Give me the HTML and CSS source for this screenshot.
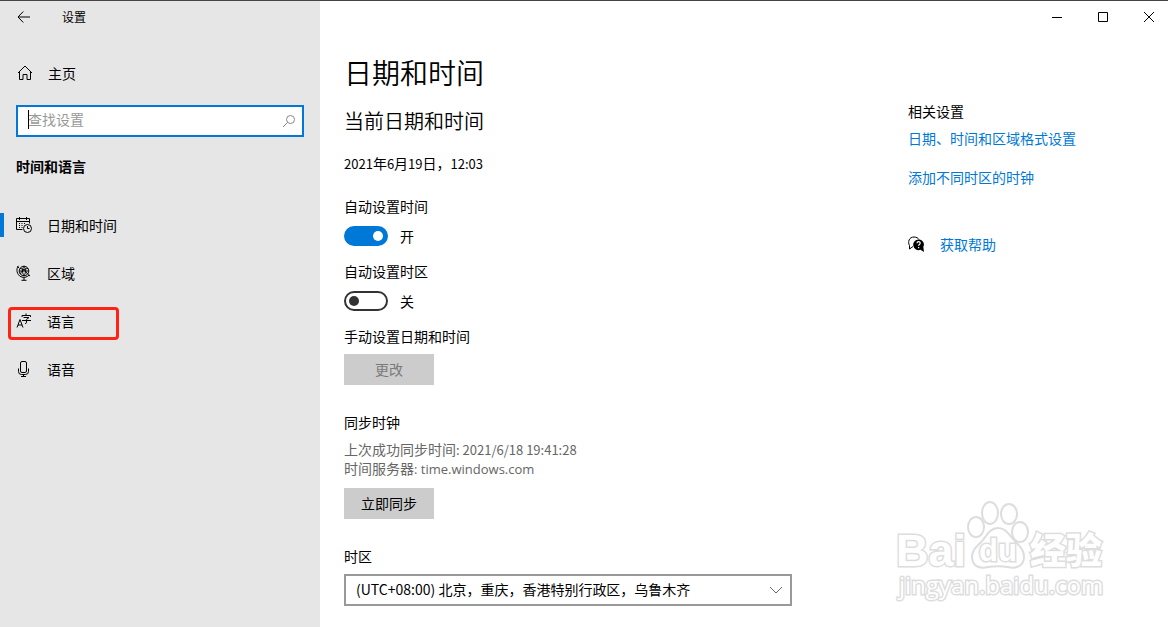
FILE: index.html
```html
<!DOCTYPE html>
<html lang="zh-CN">
<head>
	<meta charset="UTF-8">
	<meta name="viewport" content="width=device-width, initial-scale=1">
	<title>设置</title>
	<link rel="stylesheet" href="styles.css">
</head>
<body>
	<div class="window">
		<aside class="sidebar">
			<header class="titlebar">
				<button class="back" type="button" aria-label="返回">
					<svg width="14" height="12" viewBox="0 0 14 12"><path d="M13 6H1M6.300 .5L1 6l5.300 5.500"/></svg>
				</button>
				<span class="app-name">设置</span>
			</header>
			<a class="nav-link home" href="#">
				<svg class="icon" width="16" height="16" viewBox="0 0 16 16"><path d="M1 8l7-7 7 7M2.500 7v7.500h3.500v-5h4v5h3.500V7"/></svg>
				<span>主页</span>
			</a>
			<div class="search">
				<input type="text" placeholder="查找设置" aria-label="查找设置">
				<i class="caret"></i>
				<svg class="search-icon" width="14" height="14" viewBox="0 0 14 14"><circle cx="8.500" cy="5.500" r="4"/><path d="M5.600 8.400L1 13"/></svg>
			</div>
			<h2 class="group-title">时间和语言</h2>
			<nav>
				<a class="nav-link active" href="#">
					<svg class="icon" width="16" height="16" viewBox="0 0 16 16">
						<path d="M6.500 12.500h-6v-11h13v5M.5 4.500h13M3.500 0v3M10.500 0v3"/>
						<path d="M3 6.500h1M5.500 6.500h1M8 6.500h1M3 8.500h1M5.500 8.500h1M3 10.500h1M5.500 10.500h1"/>
						<circle cx="11.500" cy="11.500" r="4"/><path d="M11.500 9v2.500h2"/>
					</svg>
					<span>日期和时间</span>
				</a>
				<a class="nav-link" href="#">
					<svg class="icon" width="16" height="16" viewBox="0 0 16 16">
						<circle cx="8" cy="6" r="4.800"/>
						<path d="M4 3.500c2.500 0 6.500 2.500 7.500 5.500M12 3.500C9 3.500 5 6 4.500 9M8 1.200c-2 3-2 6.500 0 9.600M8 1.200c2 3 2 6.500 0 9.600M3.500 6h9"/>
						<path d="M2.500 .8C-.5 4 1 10 5 11.800c2.700 1.200 6 .6 8.300-1.800M8 12.500v2.500M5.500 15.300h5M1.500 1.500l1.500 1.500M12 9.500l2 1.500"/>
					</svg>
					<span>区域</span>
				</a>
				<a class="nav-link marked" href="#">
					<svg class="icon" width="16" height="16" viewBox="0 0 16 16">
						<path d="M1 14.500L4 6.500l3 8M2 12h4"/>
						<path d="M6 4V2.500h8.500V4M10 .5v2M7.500 4.500H13l-2.500 2M6 7.500h9M10.500 6.500v3q0 1-1.500 1"/>
					</svg>
					<span>语言</span>
				</a>
				<a class="nav-link" href="#">
					<svg class="icon" width="16" height="16" viewBox="0 0 16 16"><rect x="4.500" y=".5" width="6" height="11" rx="1.500"/><path d="M2.500 7.500v3q0 3 3 3h4q3 0 3-3v-3M7.500 13.500v2M5 15.500h5"/></svg>
					<span>语音</span>
				</a>
			</nav>
		</aside>

		<div class="page">
			<div class="window-controls">
				<button type="button" aria-label="最小化"><svg width="10" height="10" viewBox="0 0 10 10"><path d="M0 5.500h10"/></svg></button>
				<button type="button" aria-label="最大化"><svg width="10" height="10" viewBox="0 0 10 10"><path d="M.5 .5h9v9h-9z"/></svg></button>
				<button type="button" aria-label="关闭"><svg width="10" height="10" viewBox="0 0 10 10"><path d="M0 0l10 10M10 0L0 10"/></svg></button>
			</div>
			<div class="columns">
				<main class="content">
					<h1>日期和时间</h1>
					<h2>当前日期和时间</h2>
					<p class="now"><span class="num">2021</span>年<span class="num">6</span>月<span class="num">19</span>日，<span class="num">12:03</span></p>

					<div class="setting">
						<label for="auto-time">自动设置时间</label>
						<div class="toggle"><input type="checkbox" id="auto-time" checked><span>开</span></div>
					</div>
					<div class="setting">
						<label for="auto-zone">自动设置时区</label>
						<div class="toggle"><input type="checkbox" id="auto-zone"><span>关</span></div>
					</div>
					<div class="setting">
						<label for="change">手动设置日期和时间</label>
						<button class="btn" id="change" type="button" disabled>更改</button>
					</div>

					<section class="sync">
						<h3>同步时钟</h3>
						<p>上次成功同步时间<span class="num">: 2021/6/18 19:41:28</span></p>
						<p>时间服务器<span class="latin">: time.windows.com</span></p>
						<button class="btn" type="button">立即同步</button>
					</section>

					<div class="setting">
						<label for="zone">时区</label>
						<div class="select">
							<select id="zone">
								<option>(UTC+08:00) 北京，重庆，香港特别行政区，乌鲁木齐</option>
							</select>
							<svg width="14" height="8" viewBox="0 0 14 8"><path d="M1 1l6 6 6-6"/></svg>
						</div>
					</div>
				</main>
				<aside class="related">
					<h3>相关设置</h3>
					<a href="#">日期、时间和区域格式设置</a>
					<a href="#">添加不同时区的时钟</a>
					<a class="help" href="#">
						<svg width="17" height="16" viewBox="0 0 17 16">
							<path class="bubble" d="M5 10.500L1.500 13V9.500C-.5 6 1 1 6 1c2.500 0 4 1 5 2.500"/>
							<path class="bubble-solid" d="M10.500 3.500a5 5 0 0 1 4.800 7.300L16 16l-3.500-2.300a5.300 5.300 0 1 1-2-10.200z"/>
							<path class="question" d="M9 7.200q0-1.500 1.600-1.500t1.600 1.400q0 .8-.8 1.300t-.8 1.400M10.600 11v1.200"/>
						</svg>
						<span>获取帮助</span>
					</a>
				</aside>
			</div>
		</div>

		<svg class="watermark" width="216" height="108" viewBox="0 0 216 108">
			<g class="paw">
				<ellipse cx="96" cy="13" rx="8" ry="11"/>
				<ellipse cx="115" cy="14" rx="8" ry="10"/>
				<ellipse cx="82" cy="27" rx="8" ry="10"/>
				<ellipse cx="126" cy="32" rx="8" ry="10"/>
				<path d="M104 28c-8 0-11 7-15 12-5 6-11 9-11 17 0 10 9 12 16 10 7-1 13-1 20 0 8 2 16-1 16-10 0-8-5-11-10-17-5-5-8-12-16-12z"/>
			</g>
			<text class="logo-text" x="2" y="66" font-size="45">Bai</text>
			<text class="logo-du" x="85" y="61" font-size="31">du</text>
			<text class="logo-cjk" x="136" y="64" font-size="36">经验</text>
			<text class="logo-url" x="5" y="94" font-size="24">jingyan.baidu.com</text>
		</svg>
	</div>
</body>
</html>
```
FILE: styles.css
```css
*, *::before, *::after {box-sizing: border-box;margin: 0;padding: 0;}
body {font: 14px/20px "Noto Sans CJK SC", sans-serif;color: #000;background: #fff;}
a {color: #0078d7;text-decoration: none;}
button, input, select {font: inherit;color: inherit;border: 0;outline: 0;}
svg {flex: none;fill: none;stroke: #000;stroke-width: 1;}
h1, h2, h3 {font-weight: 400;}
.latin, .num {font-size: 13px;line-height: 1;}
.latin {font-family: "Open Sans", sans-serif;}

.window {position: relative;display: flex;min-height: 100vh;border-top: 1px solid #444;overflow: hidden;}

/* left pane */
.sidebar {width: 320px;flex: none;background: #e6e6e6;}
.titlebar {display: flex;align-items: center;height: 32px;font-size: 12px;}
.back {display: flex;align-items: center;justify-content: center;width: 48px;height: 32px;background: none;}
.app-name {padding-left: 14px;}
.nav-link {position: relative;display: flex;align-items: center;gap: 15px;height: 48px;padding-left: 16px;color: #000;}
.home {margin-top: 16px;padding-left: 17px;}
.search {position: relative;display: flex;margin: 8px 16px 0;}
.search input {width: 100%;height: 32px;padding: 0 36px 4px 10px;background: #fff;border: 2px solid #0078d7;}
.search input::placeholder {color: #999;opacity: 1;}
.search .caret {position: absolute;left: 12px;top: 5px;width: 1px;height: 19px;background: #000;}
.search-icon {position: absolute;right: 8px;top: 9px;stroke: #888;}
.group-title {margin: 19px 16px 25px;font-size: 14px;font-weight: 700;}
.active::before {content: "";position: absolute;left: 0;top: 12px;width: 4px;height: 24px;background: #0078d7;}
.marked::after {content: "";position: absolute;left: 8px;top: 10px;width: 111px;height: 33px;border: 3px solid #ff2315;border-radius: 4px;}

/* right pane */
.page {flex: 1;min-width: 0;}
.window-controls {display: flex;justify-content: flex-end;height: 32px;margin-right: -4px;}
.window-controls button {display: flex;align-items: center;justify-content: center;width: 46px;background: none;}
.columns {display: flex;gap: 116px;padding: 19px 24px;}
.content {flex: 0 1 448px;min-width: 0;}
h1 {font-size: 28px;line-height: 40px;font-weight: 350;}
.content h2 {margin-top: 15px;font-size: 20px;line-height: 28px;font-weight: 350;}
.now {margin: 18px 0 24px;}
.setting label {display: block;line-height: 18px;}
.toggle {display: flex;align-items: center;gap: 12px;height: 20px;margin: 11px 0 16px;}
.toggle input {appearance: none;width: 44px;height: 20px;padding: 3px;border: 2px solid #333;border-radius: 10px;}
.toggle input::before {content: "";display: block;width: 10px;height: 10px;background: #333;border-radius: 50%;}
.toggle input:checked {background: #0078d7;border-color: #0078d7;}
.toggle input:checked::before {margin-left: auto;background: #fff;}
.btn {display: block;width: 90px;height: 31px;margin-top: 9px;padding-bottom: 2px;background: #ccc;}
.btn:disabled {color: #7a7a7a;}
.sync {margin: 28px 0;}
.sync h3, .related h3 {font-size: 14px;}
.sync h3 {margin-bottom: 9px;line-height: 18px;}
.sync p {line-height: 19px;color: #666;}
.sync .btn {margin-top: 10px;}
.select {position: relative;margin-top: 9px;}
.select select {appearance: none;display: block;width: 100%;height: 32px;padding: 0 36px 2px 10px;background: #fff;border: 2px solid #999;}
.select svg {position: absolute;right: 9px;top: 12px;stroke: #666;pointer-events: none;}

.related {display: flex;flex-direction: column;align-items: flex-start;padding-top: 49px;}
.related a {margin-top: 7px;}
.related a + a {margin-top: 19px;}
.related a.help {display: flex;align-items: center;gap: 15px;margin-top: 47px;}
.bubble-solid {fill: #000;stroke: none;}
.question {stroke: #fff;stroke-width: 1.2;}

/* watermark over the page */
.watermark {position: absolute;right: 58px;bottom: 19px;pointer-events: none;stroke: #ddd;fill: #fff;}
.paw {stroke-width: 2;}
.watermark text {paint-order: stroke;stroke-width: 3;}
.logo-text, .logo-du {font-family: "Liberation Sans", sans-serif;font-weight: 700;}
.logo-cjk {font-family: "Noto Sans CJK SC", sans-serif;font-weight: 900;}
.logo-url {font-family: "Open Sans", sans-serif;font-weight: 400;}
```
